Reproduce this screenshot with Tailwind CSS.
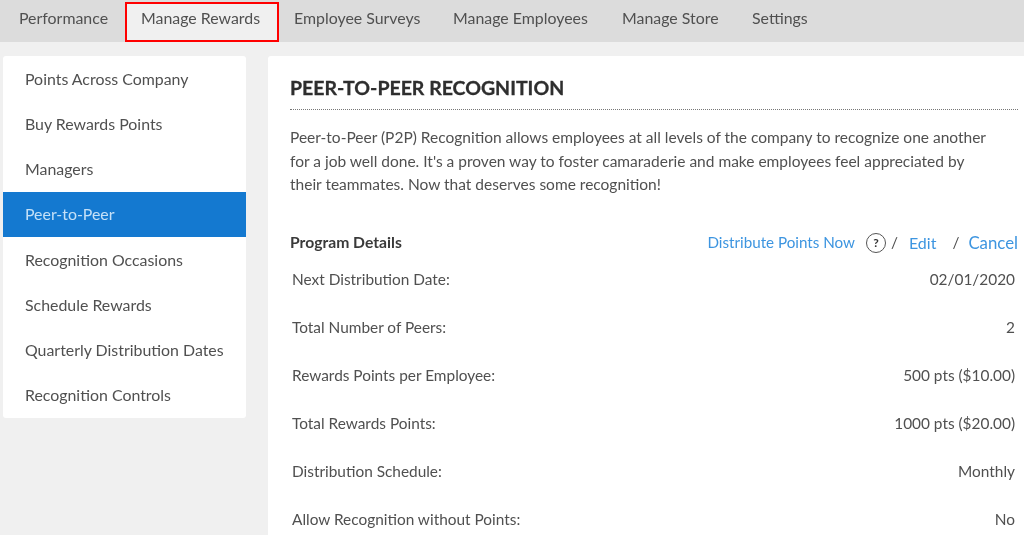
<!DOCTYPE html>
<html lang="en">
<head>
    <meta charset="UTF-8">
    <title>Peer-to-Peer Recognition</title>
    <script src="https://cdn.jsdelivr.net/npm/@tailwindcss/browser@4"></script>
</head>
<body class="bg-[#f0f0f0] h-[535px] overflow-hidden font-['Lato',sans-serif] text-[15.4px] text-[#505050]">
<div class="blur-[0.35px]">
<!-- top nav -->
<nav class="h-[42px] bg-[#dcdcdc] flex items-start text-[15.9px]">
    <a class="w-[125px] pl-[19px] pt-[6px]">Performance</a>
    <a class="w-[154px] h-[40px] mt-[2px] pl-[14px] pt-[2px] bg-[#f0f0f0] border-2 border-[#ff0000]">Manage Rewards</a>
    <a class="w-[159px] pl-[15px] pt-[6px]">Employee Surveys</a>
    <a class="w-[169px] pl-[15px] pt-[6px]">Manage Employees</a>
    <a class="w-[130px] pl-[15px] pt-[6px]">Manage Store</a>
    <a class="pl-[15px] pt-[6px]">Settings</a>
</nav>
<div class="flex items-start pt-[14px] pl-[3px]">
    <!-- side menu -->
    <ul class="w-[243px] bg-white rounded-[3px] flex flex-col text-[15.9px]">
        <li class="h-[45.25px] pl-[22px] flex items-center">Points Across Company</li>
        <li class="h-[45.25px] pl-[22px] flex items-center">Buy Rewards Points</li>
        <li class="h-[45.25px] pl-[22px] flex items-center">Managers</li>
        <li class="h-[45.25px] pl-[22px] flex items-center bg-[#1479d0] text-[#c4e0f7]">Peer-to-Peer</li>
        <li class="h-[45.25px] pl-[22px] flex items-center">Recognition Occasions</li>
        <li class="h-[45.25px] pl-[22px] flex items-center">Schedule Rewards</li>
        <li class="h-[45.25px] pl-[22px] flex items-center">Quarterly Distribution Dates</li>
        <li class="h-[45.25px] pl-[22px] flex items-center">Recognition Controls</li>
    </ul>
    <!-- main panel -->
    <main class="ml-[22px] w-[756px] h-[479px] bg-white rounded-tl-[3px] pl-[22px] pr-[6px]">
        <h1 class="pt-[18px] h-[54px] border-b border-dotted border-[#777] text-[19.5px] leading-[28px] font-bold text-[#2e2e2e] [-webkit-text-stroke:0.3px_#2e2e2e]">PEER-TO-PEER RECOGNITION</h1>
        <p class="mt-[16px] text-[15.5px] leading-[23.5px]">Peer-to-Peer (P2P) Recognition allows employees at all levels of the company to recognize one another<br>for a job well done. It's a proven way to foster camaraderie and make employees feel appreciated by<br>their teammates. Now that deserves some recognition!</p>
        <div class="mt-[34px] flex items-center h-[24px]">
            <span class="font-bold text-[15.7px] text-[#3a3a3a]">Program Details</span>
            <span class="ml-auto text-[15.2px] text-[#3d95e0]">Distribute Points Now</span>
            <span class="ml-[11px] w-[20px] h-[20px] rounded-full border border-[#555] flex items-center justify-center text-[12px] font-bold text-[#333]">?</span>
            <span class="ml-[5px]">/</span>
            <span class="ml-[11px] text-[16px] text-[#3d95e0]">Edit</span>
            <span class="ml-[16px]">/</span>
            <span class="ml-[9px] text-[16.8px] text-[#3d95e0]">Cancel</span>
        </div>
        <dl class="mt-[1px] pl-[2px] pr-[3px]">
            <div class="h-[48px] flex justify-between items-center"><dt>Next Distribution Date:</dt><dd>02/01/2020</dd></div>
            <div class="h-[48px] flex justify-between items-center"><dt>Total Number of Peers:</dt><dd>2</dd></div>
            <div class="h-[48px] flex justify-between items-center"><dt>Rewards Points per Employee:</dt><dd>500 pts ($10.00)</dd></div>
            <div class="h-[48px] flex justify-between items-center"><dt>Total Rewards Points:</dt><dd>1000 pts ($20.00)</dd></div>
            <div class="h-[48px] flex justify-between items-center"><dt>Distribution Schedule:</dt><dd>Monthly</dd></div>
            <div class="h-[48px] flex justify-between items-center"><dt>Allow Recognition without Points:</dt><dd>No</dd></div>
        </dl>
    </main>
</div>
</div>
</body>
</html>
